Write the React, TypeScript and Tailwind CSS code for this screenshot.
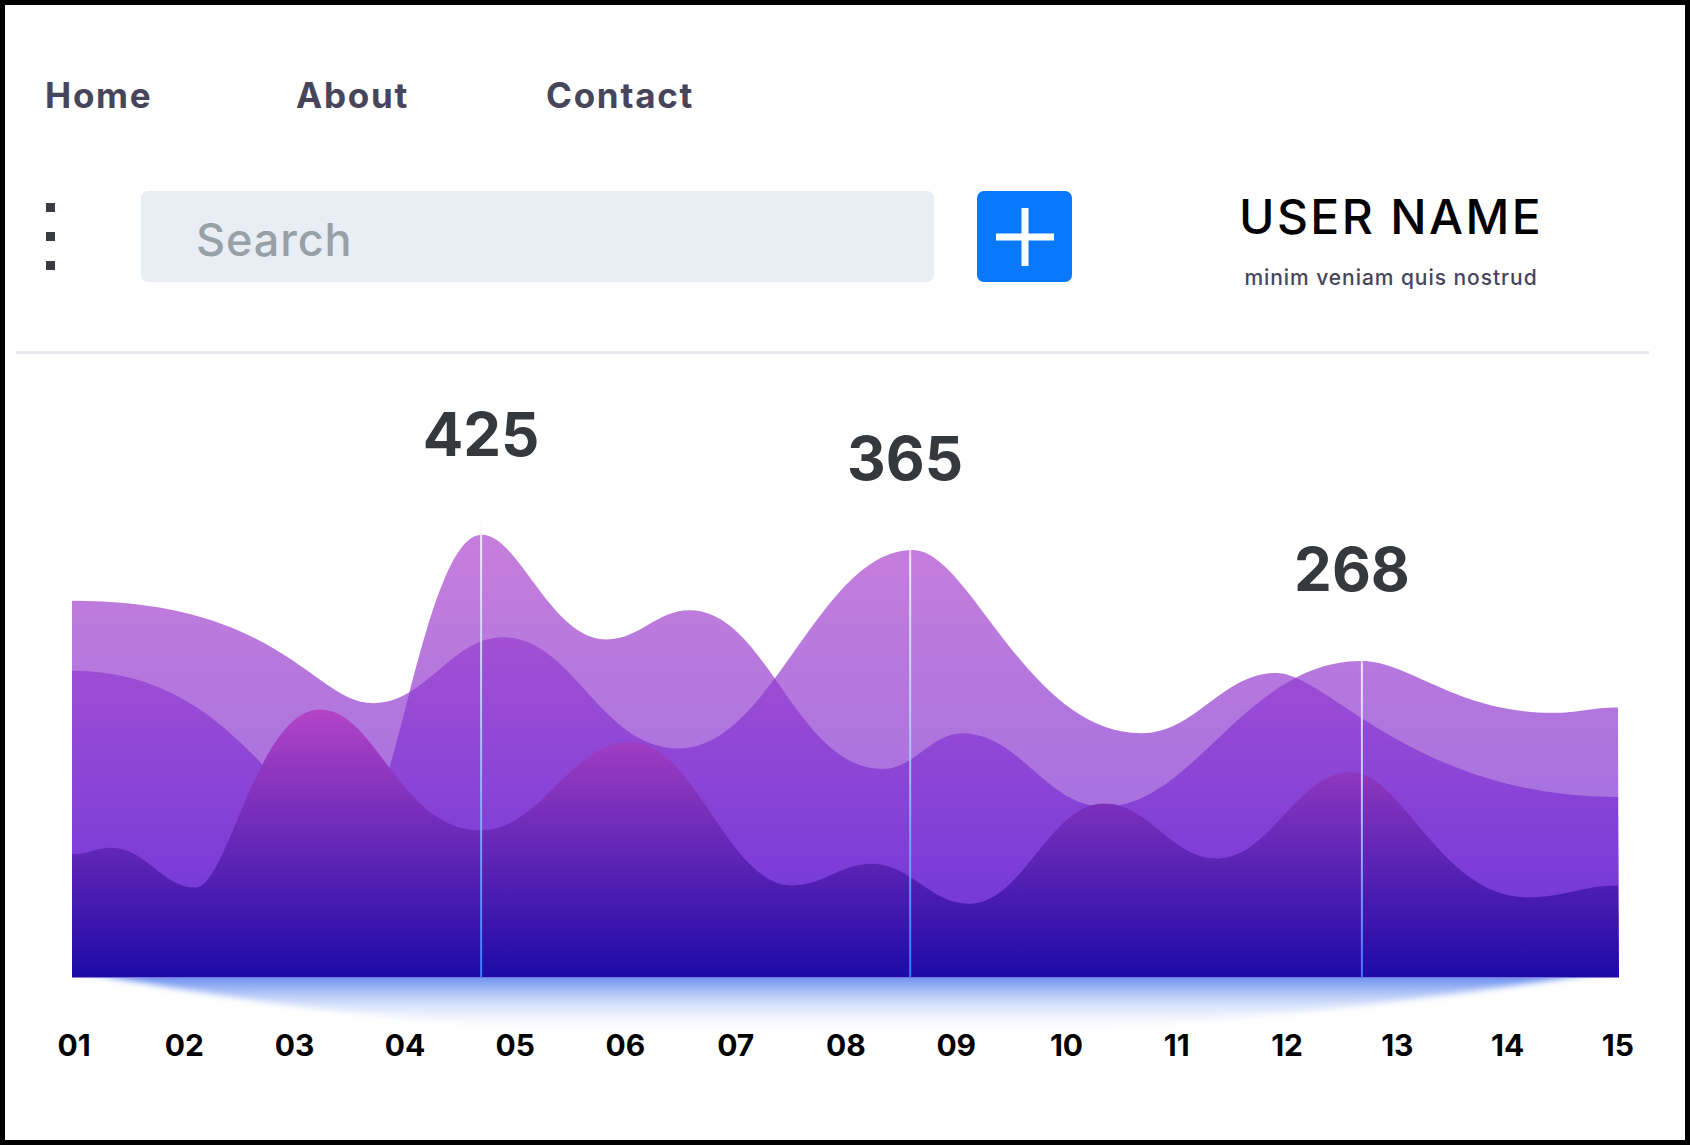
import React from 'react';

// wave extremes: x, y, handle into previous segment (l), handle into next (r)
type Node = [number, number, number, number];

const area = (pts: Node[]) => {
  let d = `M${pts[0][0]},${pts[0][1]}`;
  for (let i = 0; i < pts.length - 1; i++) {
    const [x0, y0, , r] = pts[i];
    const [x1, y1, l] = pts[i + 1];
    const w = x1 - x0;
    d += ` C${(x0 + r * w).toFixed(1)},${y0} ${(x1 - l * w).toFixed(1)},${y1} ${x1},${y1}`;
  }
  return d + ' L1502,906 L67,906 Z';
};

const waveA: Node[] = [
  [67, 557, 0, 0.7],
  [347, 652, 0.2, 0.4],
  [467, 591, 0.4, 0.4],
  [630, 694, 0.45, 0.4],
  [847, 510, 0.4, 0.25],
  [1059, 680, 0.5, 0.4],
  [1184, 624, 0.4, 0.15],
  [1501, 739, 0.6, 0],
];

const waveB: Node[] = [
  [67, 622, 0, 0.6],
  [330, 774, 0.25, 0.3],
  [447, 496, 0.45, 0.3],
  [563, 593, 0.45, 0.4],
  [640, 566, 0.4, 0.4],
  [819, 713, 0.45, 0.4],
  [893, 680, 0.4, 0.4],
  [1024, 748, 0.4, 0.35],
  [1263, 613, 0.45, 0.25],
  [1440, 661, 0.5, 0.4],
  [1501, 656, 0.4, 0],
];

const waveD: Node[] = [
  [67, 792, 0, 0.4],
  [104, 786, 0.4, 0.4],
  [182, 823, 0.4, 0.25],
  [297, 658, 0.5, 0.35],
  [446, 770, 0.5, 0.4],
  [585, 688, 0.4, 0.4],
  [735, 821, 0.4, 0.4],
  [809, 801, 0.4, 0.4],
  [899, 838, 0.4, 0.4],
  [1024, 745, 0.4, 0.4],
  [1129, 796, 0.4, 0.4],
  [1253, 716, 0.4, 0.3],
  [1418, 832, 0.5, 0.4],
  [1501, 821, 0.4, 0],
];

const markers = [
  { x: 446.5, top: 470 },
  { x: 844.5, top: 490 },
  { x: 1263.5, top: 597 },
];

const peaks = [
  { value: '425', pos: 'left-[376px] top-[50px]' },
  { value: '365', pos: 'left-[800px] top-[74px]' },
  { value: '268', pos: 'left-[1247px] top-[185px]' },
];

const days = ['01', '02', '03', '04', '05', '06', '07', '08', '09', '10', '11', '12', '13', '14', '15'];

const WaveChart = () => {
  const a = area(waveA);
  const b = area(waveB);
  const d = area(waveD);
  return (
    <svg
      className="block w-[1547px] h-[534px] ml-[67px]"
      viewBox="67 460 1435 495"
      preserveAspectRatio="none"
    >
      <defs>
        <linearGradient id="light" gradientUnits="userSpaceOnUse" x1="0" y1="495" x2="0" y2="760">
          <stop offset="0" stopColor="#c67edc" />
          <stop offset="1" stopColor="#a571df" />
        </linearGradient>
        <linearGradient id="mid" gradientUnits="userSpaceOnUse" x1="0" y1="590" x2="0" y2="860">
          <stop offset="0" stopColor="#a350d4" />
          <stop offset="1" stopColor="#7238d8" />
        </linearGradient>
        <linearGradient id="dark" gradientUnits="userSpaceOnUse" x1="0" y1="655" x2="0" y2="906">
          <stop offset="0" stopColor="#b545c7" />
          <stop offset="0.45" stopColor="#6e2bb9" />
          <stop offset="1" stopColor="#1d0aa6" />
        </linearGradient>
        <linearGradient id="glow" gradientUnits="userSpaceOnUse" x1="0" y1="906" x2="0" y2="960">
          <stop offset="0" stopColor="#6a8fef" stopOpacity="1" />
          <stop offset="0.35" stopColor="#9fb7f4" stopOpacity="0.65" />
          <stop offset="1" stopColor="#ffffff" stopOpacity="0" />
        </linearGradient>
        <linearGradient id="marker" x1="0" y1="0" x2="0" y2="1">
          <stop offset="0" stopColor="#ffffff" stopOpacity="0.15" />
          <stop offset="0.07" stopColor="#f4efff" stopOpacity="0.95" />
          <stop offset="0.45" stopColor="#b8c8ff" />
          <stop offset="1" stopColor="#3a78ff" />
        </linearGradient>
        <filter id="soft" x="-5%" y="-50%" width="110%" height="200%">
          <feGaussianBlur stdDeviation="4 3" />
        </filter>
        <clipPath id="clipA">
          <path d={a} />
        </clipPath>
        <clipPath id="belowFloor">
          <rect x="67" y="906" width="1435" height="60" />
        </clipPath>
      </defs>

      <g clipPath="url(#belowFloor)">
        <path
          d="M67,900 L1502,900 C1420,910 1250,940 1010,954 C850,962 640,962 470,952 C270,938 130,910 67,900 Z"
          fill="url(#glow)"
          filter="url(#soft)"
        />
      </g>
      <rect x="67" y="905" width="1435" height="1.4" fill="#8ba7f6" />

      <path d={a} fill="url(#light)" />
      <path d={b} fill="url(#light)" />
      <g clipPath="url(#clipA)">
        <path d={b} fill="url(#mid)" />
      </g>
      <path d={d} fill="url(#dark)" />

      {markers.map((m) => (
        <rect key={m.x} x={m.x - 0.9} y={m.top} width="1.8" height={906 - m.top} fill="url(#marker)" />
      ))}
    </svg>
  );
};

export default function App() {
  return (
    <div className="w-[1690px] h-[1145px] border-[5px] border-black bg-white overflow-hidden font-['Inter','Liberation_Sans',sans-serif]">
      {/* top nav */}
      <nav className="h-[186px] pb-[6px] pl-[40px] flex items-center text-[35px] font-bold tracking-[0.05em] text-[#46455a]">
        <a className="w-[251px]">Home</a>
        <a className="w-[250px]">About</a>
        <a>Contact</a>
      </nav>

      {/* toolbar */}
      <div className="h-[91px] flex items-center pl-[41px]">
        <div className="flex flex-col gap-[20px]">
          <span className="w-[9px] h-[9px] bg-[#3b3b42]" />
          <span className="w-[9px] h-[9px] bg-[#3b3b42]" />
          <span className="w-[9px] h-[9px] bg-[#3b3b42]" />
        </div>
        <div className="ml-[86px] w-[793px] h-full rounded-[7px] bg-[#e9edf4] flex items-center pl-[55px] pt-[6px] text-[45px] font-medium tracking-[0.02em] text-[#98a0a8]">
          Search
        </div>
        <button className="ml-[43px] w-[95px] h-full rounded-[7px] bg-[#0a78fb] flex items-center justify-center">
          <svg width="58" height="58" viewBox="0 0 58 58">
            <rect x="0" y="25.5" width="58" height="7" fill="#fff" />
            <rect x="25.5" y="0" width="7" height="58" fill="#fff" />
          </svg>
        </button>
        <div className="self-start pt-[2px] ml-[119px] w-[400px] flex flex-col items-center gap-[26px]">
          <div className="text-[48px] leading-none font-medium tracking-[0.05em] text-black">USER NAME</div>
          <div className="text-[21px] leading-none font-medium tracking-[0.045em] text-[#46455a]">minim veniam quis nostrud</div>
        </div>
      </div>

      <div className="mt-[69px] ml-[11px] w-[1633px] h-[3px] bg-[#e6e9ee]" />

      {/* chart */}
      <div className="relative pt-[142px]">
        <WaveChart />
        {peaks.map((p) => (
          <div key={p.value} className={`absolute w-[200px] text-center text-[60px] leading-none font-bold text-[#35383d] ${p.pos}`}>
            {p.value}
          </div>
        ))}
        <div className="ml-[14px] w-[1654px] grid grid-cols-15 text-center text-[30px] leading-none font-bold text-black">
          {days.map((d) => (
            <span key={d}>{d}</span>
          ))}
        </div>
      </div>
    </div>
  );
}
